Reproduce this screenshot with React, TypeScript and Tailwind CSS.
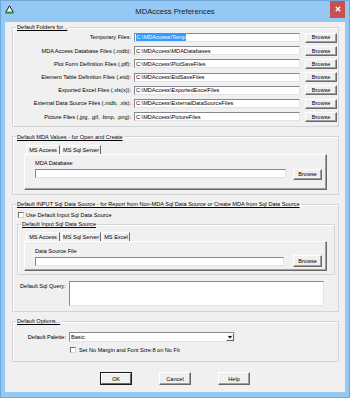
import type { ReactNode } from "react";

const folderRows = [
  { label: "Temporary Files:", value: "C:\\MDAccess\\Temp", selected: true },
  { label: "MDA Access Database Files (.mdb):", value: "C:\\MDAccess\\MDADatabases" },
  { label: "Plot Form Definition Files (.pff):", value: "C:\\MDAccess\\PlotSaveFiles" },
  { label: "Element Table Definition Files (.etd):", value: "C:\\MDAccess\\EtdSaveFiles" },
  { label: "Exported Excel Files (.xls(x)):", value: "C:\\MDAccess\\ExportedExcelFiles" },
  { label: "External Data Source Files (.mdb, .xls):", value: "C:\\MDAccess\\ExternalDataSourceFiles" },
  { label: "Picture Files (.jpg, .gif, .bmp, .png):", value: "C:\\MDAccess\\PictureFiles" },
];

function Field({ className = "", children }: { className?: string; children?: ReactNode }) {
  return (
    <div
      className={`bg-white border border-t-[#828790] border-l-[#828790] border-r-[#e3e3e3] border-b-[#e3e3e3] flex items-center overflow-hidden whitespace-nowrap ${className}`}
    >
      {children}
    </div>
  );
}

function Btn({ className = "", label, isDefault = false }: { className?: string; label: string; isDefault?: boolean }) {
  return (
    <div
      className={`flex items-center justify-center bg-[#f0f0f0] ${
        isDefault ? "border border-[#1a1a1a]" : "border border-t-white border-l-white border-r-[#696969] border-b-[#696969]"
      } ${className}`}
    >
      <div
        className={`w-full h-full flex items-center justify-center ${
          isDefault
            ? "border border-t-white border-l-white border-r-[#696969] border-b-[#696969]"
            : "shadow-[inset_-1px_-1px_0_#a0a0a0]"
        }`}
      >
        {label}
      </div>
    </div>
  );
}

function CheckBox() {
  return <div className="w-[6px] h-[6px] bg-white border border-t-[#707070] border-l-[#707070] border-r-[#d8d8d8] border-b-[#d8d8d8] shrink-0" />;
}

function Group({ title, className = "", children }: { title: string; className?: string; children: ReactNode }) {
  return (
    <fieldset className={`border border-[#d5d5d5] shadow-[inset_1px_1px_0_#ffffff] ${className}`}>
      <legend className="ml-[3px] px-[1px] leading-[8px] underline whitespace-nowrap">{title}</legend>
      {children}
    </fieldset>
  );
}

function Tabs({ names }: { names: { name: string; w: string }[] }) {
  return (
    <div className="flex h-[9px] pl-[2px]">
      {names.map((t, i) => (
        <div
          key={t.name}
          className={`${t.w} h-full shrink-0 flex items-center justify-center whitespace-nowrap border-t border-l border-t-white border-l-white border-r border-r-[#696969] ${
            i === 0 ? "" : "ml-[1px]"
          }`}
        >
          {t.name}
        </div>
      ))}
    </div>
  );
}

function Panel({ className = "", children }: { className?: string; children: ReactNode }) {
  return (
    <div
      className={`w-[303px] border border-t-white border-l-white border-r-[#696969] border-b-[#696969] shadow-[inset_-1px_-1px_0_#a0a0a0] pl-[10px] ${className}`}
    >
      {children}
    </div>
  );
}

export default function App() {
  return (
    <div className="w-[350px] h-[398px] bg-[#95c8f2] border border-[#6fa9dc] font-['Liberation_Sans',Arial,sans-serif] text-[5.6px] text-black overflow-hidden">
      {/* title bar */}
      <div className="relative h-[21px] flex items-center justify-center">
        <svg className="absolute left-[4px] top-[4px]" width="9" height="9" viewBox="0 0 9 9">
          <path d="M4.5 0.8 L8.2 7.2 L0.8 7.2 Z" fill="#ffffff" stroke="#1b1b1b" strokeWidth="1" />
          <rect x="0.5" y="7" width="8" height="1.8" fill="#2f9a3c" />
        </svg>
        <span className="text-[7.6px] leading-none text-[#1b1b1b]">MDAccess Preferences</span>
        <div className="absolute right-[4px] top-[-1px] w-[15px] h-[18px] bg-[#c75050] flex items-center justify-center">
          <svg width="6" height="6" viewBox="0 0 6 6">
            <path d="M0.8 0.8 L5.2 5.2 M5.2 0.8 L0.8 5.2" stroke="#ffffff" strokeWidth="1.3" />
          </svg>
        </div>
      </div>

      {/* client area */}
      <div className="ml-[4px] w-[340px] h-[370px] bg-[#f0f0f0] pl-[7px] pt-[1px]">
        <Group title="Default Folders for..." className="w-[327px] pb-[3px]">
          <div className="flex flex-col">
            {folderRows.map((r) => (
              <div key={r.label} className="flex items-center h-[13.2px]">
                <div className="w-[119px] text-right pr-[1px] whitespace-nowrap">{r.label}</div>
                <Field className="ml-[2px] w-[166px] h-[9px] pl-[1px]">
                  <span className={r.selected ? "bg-[#3399ff] text-white px-[0.5px]" : ""}>{r.value}</span>
                </Field>
                <Btn className="ml-[5px] w-[32px] h-[10px]" label="Browse" />
              </div>
            ))}
          </div>
        </Group>

        <Group title="Default MDA Values - for Open and Create" className="mt-[5.5px] w-[327px] pb-[4px]">
          <div className="ml-[11px] mt-[4px]">
            <Tabs
              names={[
                { name: "MS Access", w: "w-[34px]" },
                { name: "MS Sql Server", w: "w-[40px]" },
              ]}
            />
            <Panel className="h-[36px] pt-[4px]">
              <div className="leading-[8px]">MDA Database</div>
              <div className="flex items-start mt-[2px]">
                <Field className="w-[251px] h-[9px]" />
                <Btn className="ml-[7px] w-[29px] h-[11px]" label="Browse" />
              </div>
            </Panel>
          </div>
        </Group>

        <Group
          title="Default INPUT Sql Data Source - for Report from Non-MDA Sql Data Source or Create MDA from Sql Data Source"
          className="mt-[5.5px] w-[327px] pb-[5px]"
        >
          <div className="flex items-center h-[9px] mt-[2px] pl-[5px]">
            <CheckBox />
            <span className="ml-[2px] whitespace-nowrap">Use Default Input Sql Data Source</span>
          </div>
          <fieldset className="ml-[4px] mt-[1px] w-[318px] border border-[#d5d5d5] shadow-[inset_1px_1px_0_#ffffff] pb-[3px]">
            <legend className="ml-[3px] px-[1px] leading-[8px] underline whitespace-nowrap">Default Input Sql Data Source</legend>
            <div className="ml-[6px] mt-[4px]">
              <Tabs
                names={[
                  { name: "MS Access", w: "w-[34px]" },
                  { name: "MS Sql Server", w: "w-[40px]" },
                  { name: "MS Excel", w: "w-[28px]" },
                ]}
              />
              <Panel className="h-[30px] pt-[5px]">
                <div className="leading-[8px]">Data Source File</div>
                <div className="flex items-start">
                  <Field className="w-[249px] h-[9px] mt-[2px]" />
                  <Btn className="ml-[9px] w-[29px] h-[12px]" label="Browse" />
                </div>
              </Panel>
            </div>
          </fieldset>
          <div className="flex items-start mt-[6px] pl-[7px]">
            <div className="w-[49px] mt-[1px] leading-[8px] whitespace-nowrap">Default Sql Query:</div>
            <Field className="w-[255px] h-[25px]" />
          </div>
        </Group>

        <Group title="Default Options..." className="mt-[5px] w-[327px] pb-[8px]">
          <div className="flex items-center mt-[7px]">
            <div className="w-[54px] text-right pr-[1px] whitespace-nowrap">Default Palette:</div>
            <Field className="ml-[2px] w-[166px] h-[10px] pl-[1px] justify-between">
              <span>Basic</span>
              <div className="w-[8px] h-full border border-t-white border-l-white border-r-[#696969] border-b-[#696969] bg-[#f0f0f0] flex items-center justify-center">
                <svg width="4" height="3" viewBox="0 0 4 3">
                  <path d="M0 0 L4 0 L2 2.5 Z" fill="#000000" />
                </svg>
              </div>
            </Field>
          </div>
          <div className="flex items-center h-[6px] mt-[5px] pl-[57px]">
            <CheckBox />
            <span className="ml-[3px] whitespace-nowrap">Set No Margin and Font Size:8 on No Fit</span>
          </div>
        </Group>

        <div className="flex justify-center gap-[27px] mt-[10px] pr-[7px]">
          <Btn className="w-[32px] h-[13px]" label="OK" isDefault />
          <Btn className="w-[32px] h-[13px]" label="Cancel" />
          <Btn className="w-[32px] h-[13px]" label="Help" />
        </div>
      </div>
    </div>
  );
}
